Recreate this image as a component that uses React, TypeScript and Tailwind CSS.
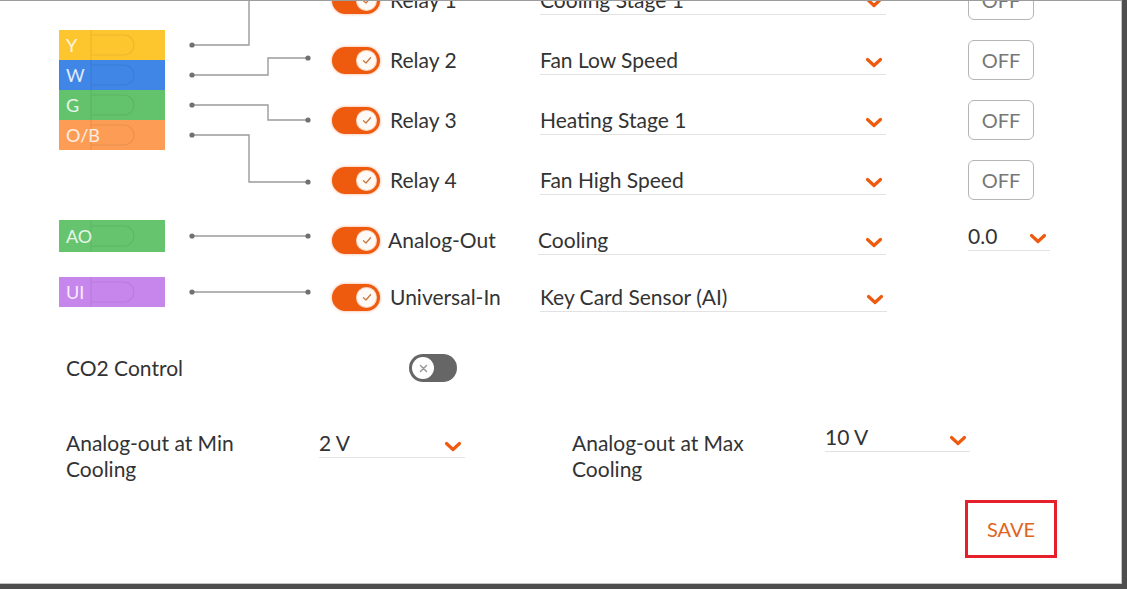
import React from "react";

const ORANGE = "#ee5a0e";

function Chevron({ className = "" }: { className?: string }) {
  return (
    <svg width="18" height="11" viewBox="0 0 18 11" className={className}>
      <path d="M2.5 2.5 L9 8.5 L15.5 2.5" fill="none" stroke={ORANGE} strokeWidth="3.2" strokeLinecap="round" strokeLinejoin="round" />
    </svg>
  );
}

function Select({ value, className = "" }: { value: string; className?: string }) {
  return (
    <div className={`flex items-center justify-between border-b border-[#e2e2e2] pb-[2px] ${className}`}>
      <span className="text-[21px] leading-[24px] text-[#333]">{value}</span>
      <Chevron className="mt-[6px] mr-[3px]" />
    </div>
  );
}

function ToggleOn() {
  return (
    <div className="w-[48px] h-[27px] shrink-0 rounded-full bg-[#ee5a0e] flex items-center justify-end pr-[3px] shadow-[0_0_3px_rgba(238,90,14,0.55)]">
      <div className="w-[21px] h-[21px] rounded-full bg-[#fffaf6] flex items-center justify-center shadow-[inset_0_0_0_1px_rgba(238,90,14,0.25)]">
        <svg width="10" height="9" viewBox="0 0 10 9">
          <path d="M1.5 4.8 L4 7 L8.5 1.8" fill="none" stroke="#c9773f" strokeWidth="1.3" strokeLinecap="round" strokeLinejoin="round" />
        </svg>
      </div>
    </div>
  );
}

function ToggleOff() {
  return (
    <div className="w-[48px] h-[28px] rounded-full bg-[#666] flex items-center pl-[3px]">
      <div className="w-[22px] h-[22px] rounded-full bg-white flex items-center justify-center">
        <svg width="9" height="9" viewBox="0 0 9 9">
          <path d="M1.5 1.5 L7.5 7.5 M7.5 1.5 L1.5 7.5" stroke="#9a9a9a" strokeWidth="1.5" strokeLinecap="round" />
        </svg>
      </div>
    </div>
  );
}

function Wire({ label, color, h = 30 }: { label: string; color: string; h?: number }) {
  return (
    <div className={`relative w-[106px] flex items-center pl-[7px] ${color}`} style={{ height: h }}>
      <span className="text-[18px] text-white/85 leading-none">{label}</span>
      <svg className="absolute inset-0" width="106" height={h}>
        <path
          d={`M32 0 V${h} M32 ${h / 2 - 10} H65 A10 10 0 0 1 65 ${h / 2 + 10} H32`}
          fill="none"
          stroke="rgba(0,0,0,0.07)"
          strokeWidth="1.2"
        />
      </svg>
    </div>
  );
}

function OffButton() {
  return (
    <div className="w-[66px] h-[40px] rounded-[6px] border border-[#b5b5b5] flex items-center justify-center text-[20px] text-[#777]">
      OFF
    </div>
  );
}

const relays = [
  { name: "Relay 1", value: "Cooling Stage 1" },
  { name: "Relay 2", value: "Fan Low Speed" },
  { name: "Relay 3", value: "Heating Stage 1" },
  { name: "Relay 4", value: "Fan High Speed" },
];

function Connectors() {
  const line = "#9b9b9b";
  const dots: [number, number][] = [
    [27, 75], [27, 105], [27, 135], [27, 165], [27, 266], [27, 322],
    [143, 88], [143, 150], [143, 212], [143, 266], [143, 322],
  ];
  return (
    <svg width="167" height="384" className="shrink-0">
      <g fill="none" stroke={line} strokeWidth="1.4">
        <path d="M27 75 H84 V0" />
        <path d="M27 105 H103 V88 H143" />
        <path d="M27 135 H103 V150 H143" />
        <path d="M27 165 H84 V212 H143" />
        <path d="M27 266 H143" />
        <path d="M27 322 H143" />
      </g>
      {dots.map(([x, y], i) => (
        <circle key={i} cx={x} cy={y} r="2.6" fill="#707070" />
      ))}
    </svg>
  );
}

export default function App() {
  return (
    <div className="w-[1127px] h-[589px] bg-[#4e4e4e] pr-[5px] pb-[5px] overflow-hidden font-['Lato','Noto_Sans',sans-serif]">
      <div className="h-full bg-white border-t border-t-[#9c9c9c] border-r border-b border-r-[#c4c4c4] border-b-[#c4c4c4] overflow-hidden">
        <div className="-mt-[31px]">
          {/* wiring + relays */}
          <div className="flex h-[384px]">
            <div className="w-[165px] shrink-0 pl-[59px] flex flex-col">
              <div className="mt-[60px] flex flex-col">
                <Wire label="Y" color="bg-[#fdc62e]" />
                <Wire label="W" color="bg-[#3f86e6]" />
                <Wire label="G" color="bg-[#63c26c]" />
                <Wire label="O/B" color="bg-[#fc9c55]" />
              </div>
              <div className="mt-[70px]">
                <Wire label="AO" color="bg-[#66c46f]" h={32} />
              </div>
              <div className="mt-[25px]">
                <Wire label="UI" color="bg-[#c686ec]" />
              </div>
            </div>
            <Connectors />
            <div className="flex flex-col">
              {relays.map((r) => (
                <div key={r.name} className="h-[60px] flex items-center">
                  <ToggleOn />
                  <span className="ml-[10px] w-[150px] text-[21px] text-[#333]">{r.name}</span>
                  <Select value={r.value} className="w-[346px] mt-[2px]" />
                  <div className="ml-[82px]">
                    <OffButton />
                  </div>
                </div>
              ))}
              <div className="h-[60px] flex items-center">
                <ToggleOn />
                <span className="ml-[8px] w-[150px] text-[21px] text-[#333]">Analog-Out</span>
                <Select value="Cooling" className="w-[348px] mt-[2px]" />
                <Select value="0.0" className="w-[82px] ml-[82px] -mt-[6px]" />
              </div>
              <div className="h-[54px] flex items-center">
                <ToggleOn />
                <span className="ml-[10px] w-[150px] text-[21px] text-[#333]">Universal-In</span>
                <Select value="Key Card Sensor (AI)" className="w-[347px] mt-[2px]" />
              </div>
            </div>
          </div>

          {/* CO2 */}
          <div className="h-[28px] flex items-center pl-[66px]">
            <span className="w-[343px] text-[21px] text-[#333]">CO2 Control</span>
            <ToggleOff />
          </div>

          {/* analog out min / max */}
          <div className="mt-[48px] flex items-start pl-[66px]">
            <div className="w-[253px] text-[21px] leading-[26px] text-[#333]">
              Analog-out at Min
              <br />
              Cooling
            </div>
            <Select value="2 V" className="w-[146px] mt-[1px]" />
            <div className="ml-[107px] w-[253px] text-[21px] leading-[26px] text-[#333]">
              Analog-out at Max
              <br />
              Cooling
            </div>
            <Select value="10 V" className="w-[145px] -mt-[5px]" />
          </div>

          {/* save */}
          <div className="mt-[18px] pl-[965px]">
            <div className="w-[92px] h-[58px] border-[3px] border-[#e5202b] flex items-center justify-center text-[20px] text-[#e0641e]">
              SAVE
            </div>
          </div>
        </div>
      </div>
    </div>
  );
}
